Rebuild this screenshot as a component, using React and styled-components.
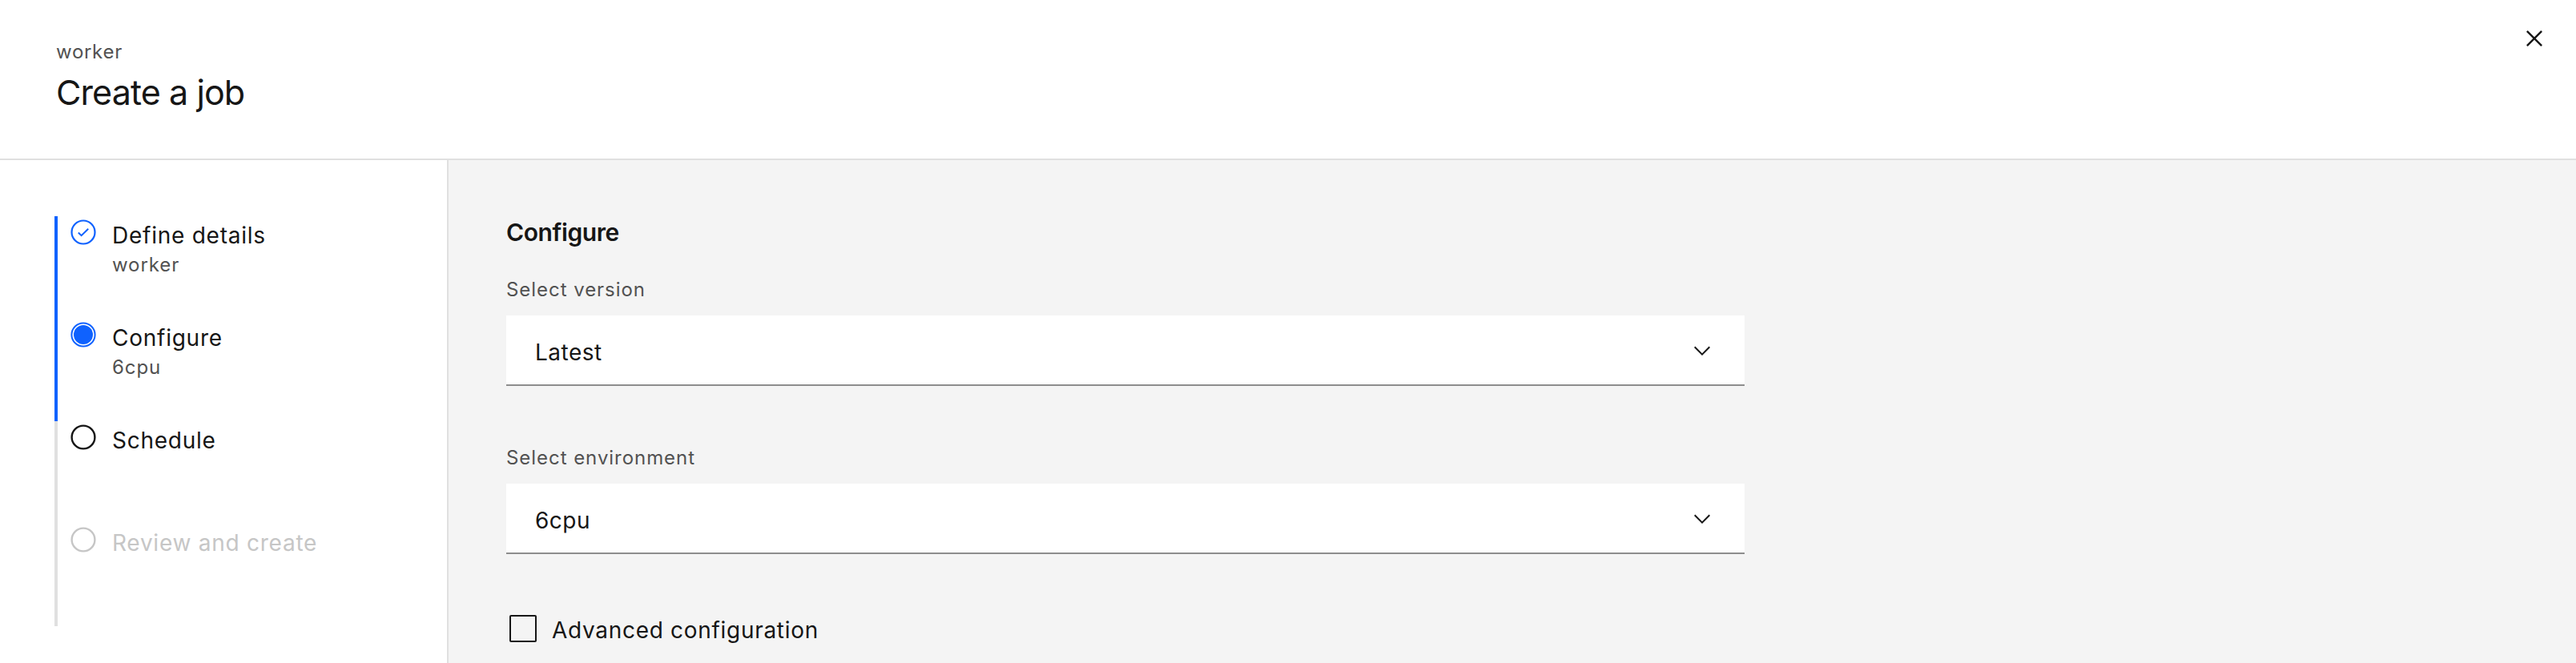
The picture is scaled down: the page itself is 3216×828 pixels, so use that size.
import React from "react";
import styled, { createGlobalStyle } from "styled-components";

const Global = createGlobalStyle`
  html, body { margin: 0; padding: 0; background: #ffffff; }
  body { font-family: Inter, "Noto Sans", "Liberation Sans", sans-serif; color: #161616; }
  * { box-sizing: border-box; }
`;

const Page = styled.div`
  width: 3216px;
  height: 828px;
  display: flex;
  flex-direction: column;
  overflow: hidden;
  background: #ffffff;
`;

const Header = styled.header`
  height: 200px;
  flex: none;
  display: flex;
  justify-content: space-between;
  align-items: flex-start;
  padding: 49px 32px 0 70px;
  border-bottom: 2px solid #e0e0e0;
`;

const TitleBlock = styled.div`
  display: flex;
  flex-direction: column;
`;

const Label = styled.div`
  font-size: 24px;
  line-height: 32px;
  letter-spacing: 0.7px;
  color: #525252;
`;

const Title = styled.h1`
  margin: 8px 0 0;
  font-size: 43px;
  line-height: 52px;
  font-weight: 400;
  letter-spacing: -0.9px;
  color: #161616;
`;

const CloseButton = styled.button`
  width: 40px;
  height: 40px;
  margin-top: -21px;
  padding: 0;
  border: none;
  background: transparent;
  display: flex;
  align-items: center;
  justify-content: center;
  cursor: pointer;
  color: #161616;
`;

const Body = styled.div`
  flex: 1;
  display: flex;
  min-height: 0;
`;

const Sidebar = styled.nav`
  width: 560px;
  flex: none;
  border-right: 2px solid #e0e0e0;
  padding: 70px 0 0 68px;
  background: #ffffff;
`;

const StepList = styled.ol`
  list-style: none;
  margin: 0;
  padding: 0;
  display: flex;
  flex-direction: column;
`;

const Step = styled.li`
  height: 128px;
  display: flex;
  gap: 20px;
  padding-left: 16px;
  border-left: 4px solid ${(p) => (p.$done ? "#0f62fe" : "#e0e0e0")};
`;

const StepIcon = styled.svg`
  width: 32px;
  height: 32px;
  flex: none;
  margin-top: 4px;
`;

const StepText = styled.div`
  display: flex;
  flex-direction: column;
  padding-top: 6px;
`;

const StepTitle = styled.div`
  font-size: 28px;
  line-height: 36px;
  letter-spacing: 0.75px;
  color: ${(p) => (p.$disabled ? "#c6c6c6" : "#161616")};
`;

const StepSub = styled.div`
  margin-top: 1px;
  font-size: 24px;
  line-height: 36px;
  letter-spacing: 0.9px;
  color: #525252;
`;

const Main = styled.main`
  flex: 1;
  background: #f4f4f4;
  padding: 70px 0 0 72px;
  display: flex;
  flex-direction: column;
`;

const SectionTitle = styled.h2`
  margin: 0 0 36px;
  font-size: 30px;
  line-height: 40px;
  font-weight: 600;
  letter-spacing: -0.4px;
  color: #161616;
`;

const Field = styled.div`
  display: flex;
  flex-direction: column;
  width: 1546px;
  margin-bottom: ${(p) => p.$gap || 0}px;
`;

const FieldLabel = styled.label`
  font-size: 24px;
  line-height: 32px;
  letter-spacing: 0.95px;
  color: #525252;
  margin-bottom: 16px;
`;

const Select = styled.div`
  height: 88px;
  background: #ffffff;
  border-bottom: 2px solid #8d8d8d;
  display: flex;
  justify-content: space-between;
  align-items: flex-start;
  padding: 28px 37px 0 36px;
  cursor: pointer;
`;

const SelectValue = styled.span`
  font-size: 28px;
  line-height: 36px;
  letter-spacing: 0.5px;
  color: #161616;
`;

const Chevron = styled.svg`
  width: 32px;
  height: 32px;
  flex: none;
`;

const CheckRow = styled.label`
  display: flex;
  align-items: flex-start;
  gap: 20px;
  margin-top: 76px;
  padding-left: 4px;
  cursor: pointer;
`;

const Box = styled.span`
  width: 34px;
  height: 34px;
  border: 2px solid #161616;
  border-radius: 2px;
  background: transparent;
  flex: none;
`;

const CheckText = styled.span`
  margin-top: 1px;
  margin-left: -1px;
  font-size: 28px;
  line-height: 36px;
  letter-spacing: 0.7px;
  color: #161616;
`;

const BLUE = "#0f62fe";

function CompleteIcon() {
  return (
    <StepIcon viewBox="0 0 32 32">
      <circle cx="16" cy="16" r="14.5" fill="none" stroke={BLUE} strokeWidth="2.2" />
      <polyline points="9.8,16.6 13.6,20.2 22.2,11.8" fill="none" stroke={BLUE} strokeWidth="2" />
    </StepIcon>
  );
}

function CurrentIcon() {
  return (
    <StepIcon viewBox="0 0 32 32">
      <circle cx="16" cy="16" r="14.6" fill="none" stroke={BLUE} strokeWidth="2" />
      <circle cx="16" cy="16" r="12" fill={BLUE} />
    </StepIcon>
  );
}

function EmptyIcon({ color }) {
  return (
    <StepIcon viewBox="0 0 32 32">
      <circle cx="16" cy="16" r="14.4" fill="none" stroke={color} strokeWidth="2.4" />
    </StepIcon>
  );
}

function ChevronDown() {
  return (
    <Chevron viewBox="0 0 16 16" fill="#161616">
      <path d="M8 11L3 6 3.7 5.3 8 9.6 12.3 5.3 13 6z" />
    </Chevron>
  );
}

const steps = [
  { title: "Define details", sub: "worker", state: "complete" },
  { title: "Configure", sub: "6cpu", state: "current" },
  { title: "Schedule", state: "incomplete" },
  { title: "Review and create", state: "disabled" },
];

function StepIconFor({ state }) {
  if (state === "complete") return <CompleteIcon />;
  if (state === "current") return <CurrentIcon />;
  if (state === "disabled") return <EmptyIcon color="#c6c6c6" />;
  return <EmptyIcon color="#161616" />;
}

export default function App() {
  return (
    <Page>
      <Global />
      <Header>
        <TitleBlock>
          <Label>worker</Label>
          <Title>Create a job</Title>
        </TitleBlock>
        <CloseButton aria-label="Close">
          <svg width="40" height="40" viewBox="0 0 32 32" fill="#161616">
            <polygon points="24 9.4 22.6 8 16 14.6 9.4 8 8 9.4 14.6 16 8 22.6 9.4 24 16 17.4 22.6 24 24 22.6 17.4 16 24 9.4" />
          </svg>
        </CloseButton>
      </Header>
      <Body>
        <Sidebar>
          <StepList>
            {steps.map((s) => (
              <Step key={s.title} $done={s.state === "complete" || s.state === "current"}>
                <StepIconFor state={s.state} />
                <StepText>
                  <StepTitle $disabled={s.state === "disabled"}>{s.title}</StepTitle>
                  {s.sub && <StepSub>{s.sub}</StepSub>}
                </StepText>
              </Step>
            ))}
          </StepList>
        </Sidebar>
        <Main>
          <SectionTitle>Configure</SectionTitle>
          <Field $gap={74}>
            <FieldLabel>Select version</FieldLabel>
            <Select>
              <SelectValue>Latest</SelectValue>
              <ChevronDown />
            </Select>
          </Field>
          <Field>
            <FieldLabel>Select environment</FieldLabel>
            <Select>
              <SelectValue>6cpu</SelectValue>
              <ChevronDown />
            </Select>
          </Field>
          <CheckRow>
            <Box />
            <CheckText>Advanced configuration</CheckText>
          </CheckRow>
        </Main>
      </Body>
    </Page>
  );
}
